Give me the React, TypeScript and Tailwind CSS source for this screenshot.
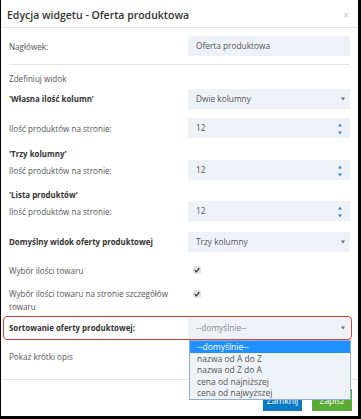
import React from "react";

const font = { fontFamily: '"Open Sans", "Noto Sans", sans-serif' };

function Caret() {
  return (
    <svg width="4" height="4" viewBox="0 0 4 4" className="absolute right-[5px] top-1/2 -translate-y-1/2">
      <path d="M0 0.5 L4 0.5 L2 3.5 Z" fill="#666" />
    </svg>
  );
}

function Spinner() {
  return (
    <div className="absolute right-[8px] top-[5px] flex flex-col gap-[4px]">
      <svg width="4" height="4" viewBox="0 0 4 4"><path d="M0 3.5 L4 3.5 L2 0.5 Z" fill="#2f86d6" /></svg>
      <svg width="4" height="4" viewBox="0 0 4 4"><path d="M0 0.5 L4 0.5 L2 3.5 Z" fill="#2f86d6" /></svg>
    </div>
  );
}

function Field({ value, kind, muted }: { value: string; kind?: "select" | "number"; muted?: boolean }) {
  return (
    <div className={`relative w-[162px] h-[20px] bg-[#eef2f6] flex items-center pl-[8px] text-[8.3px] ${muted ? "text-[#8a8a8a]" : "text-[#555]"}`}>
      {value}
      {kind === "select" && <Caret />}
      {kind === "number" && <Spinner />}
    </div>
  );
}

function Check() {
  return (
    <div className="ml-[5px] w-[8px] h-[8px] rounded-[2px] bg-[#e3e3e3] flex items-center justify-center">
      <svg width="6" height="6" viewBox="0 0 6 6"><path d="M0.8 3.2 L2.4 4.8 L5.3 1.2" stroke="#333" strokeWidth="1.3" fill="none" /></svg>
    </div>
  );
}

function Row({ label, bold, children, className = "" }: { label: React.ReactNode; bold?: boolean; children: React.ReactNode; className?: string }) {
  return (
    <div className={`flex items-center ${className}`}>
      <div className={`w-[179px] leading-[13px] ${bold ? "text-[7.9px] font-bold text-[#333]" : "text-[8.1px] text-[#555]"}`}>{label}</div>
      {children}
    </div>
  );
}

export default function App() {
  return (
    <div className="w-[361px] h-[419px] bg-black pl-[1px] pr-[3px] pb-[3px]" style={font}>
      <div className="w-full h-full bg-white flex flex-col relative">
        <div className="h-[28px] border-b border-[#e5e5e5] flex items-start justify-between pl-[6px] pr-[9px] pt-[8px]">
          <div className="text-[10.5px] leading-[15px] font-semibold text-[#333]">Edycja widgetu - Oferta produktowa</div>
          <div className="text-[10px] leading-[15px] text-[#c8c8c8]">×</div>
        </div>
        <div className="pl-[8px] pr-[8px] flex flex-col">
          <Row label="Nagłówek:" className="mt-[8px]">
            <Field value="Oferta produktowa" />
          </Row>
          <div className="h-px bg-[#e5e5e5] mt-[8px]" />
          <div className="mt-[8px] text-[8.1px] leading-[12px] text-[#555]">Zdefiniuj widok</div>
          <Row label="'Własna ilość kolumn'" bold className="mt-[4px]">
            <Field value="Dwie kolumny" kind="select" />
          </Row>
          <Row label="Ilość produktów na stronie:" className="mt-[9px]">
            <Field value="12" kind="number" />
          </Row>
          <div className="mt-[10px] text-[7.9px] leading-[12px] font-bold text-[#333]">'Trzy kolumny'</div>
          <Row label="Ilość produktów na stronie:">
            <Field value="12" kind="number" />
          </Row>
          <div className="mt-[9px] text-[7.9px] leading-[12px] font-bold text-[#333]">'Lista produktów'</div>
          <Row label="Ilość produktów na stronie:">
            <Field value="12" kind="number" />
          </Row>
          <Row label="Domyślny widok oferty produktowej" bold className="mt-[11px]">
            <Field value="Trzy kolumny" kind="select" />
          </Row>
          <Row label="Wybór ilości towaru" className="mt-[8px] h-[20px]">
            <Check />
          </Row>
          <div className="flex items-start mt-[7px]">
            <div className="w-[179px] text-[8.1px] leading-[13px] text-[#555] pr-[6px]">Wybór ilości towaru na stronie szczegółów towaru</div>
            <div className="mt-[3px]"><Check /></div>
          </div>
          <div className="relative mt-[5px]">
            <Row label="Sortowanie oferty produktowej:" bold>
              <Field value="--domyślnie--" kind="select" muted />
            </Row>
            <div className="absolute -left-[6px] -right-[2px] -top-[2px] -bottom-[2px] border-[1.5px] border-[#e8383d] rounded-[4px]" />
            <div className="absolute left-[180px] top-[22px] w-[162px] bg-[#eef2f6] border border-[#8fb0d6] z-10 text-[8.5px] leading-[11.5px] text-[#555]">
              <div className="bg-[#1e90ff] text-white pl-[7px]">--domyślnie--</div>
              <div className="pl-[7px]">nazwa od A do Z</div>
              <div className="pl-[7px]">nazwa od Z do A</div>
              <div className="pl-[7px]">cena od najniższej</div>
              <div className="pl-[7px]">cena od najwyższej</div>
            </div>
          </div>
          <Row label="Pokaż krótki opis" className="mt-[12px]">
            <div />
          </Row>
        </div>
        <div className="mt-[16px] border-t border-[#e5e5e5] flex justify-end gap-[10px] pr-[6px] pt-[9px]">
          <div className="w-[39px] h-[22px] bg-[#0b7bc1] text-white text-[8.5px] flex items-center justify-center pt-[3px]">Zamknij</div>
          <div className="w-[40px] h-[22px] bg-[#5aab35] text-white text-[8.5px] flex items-center justify-center pt-[3px]">Zapisz</div>
        </div>
      </div>
    </div>
  );
}
